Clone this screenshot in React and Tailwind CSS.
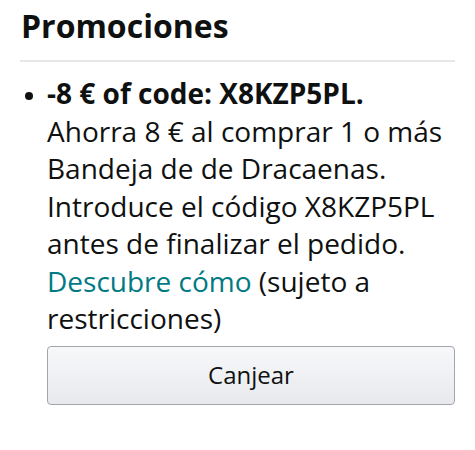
export default function App() {
  return (
    <div className="w-[475px] h-[450px] bg-white text-[#0f1111] font-['Open_Sans',sans-serif]">
      <div className="pl-[20px] pr-[20px] pt-[6px]">
        <h2 className="pl-[1px] text-[32px] leading-[40px] font-bold">Promociones</h2>
        <div className="mt-[14px] h-[2px] bg-[#e7e7e7]" />
        <ul className="mt-[13px] text-[28px] leading-[37.5px]">
          <li className="flex">
            <span className="w-[27px] shrink-0 pl-[5px] pt-[17px]">
              <span className="block w-[8px] h-[8px] rounded-full bg-[#0f1111]" />
            </span>
            <div className="flex-1">
              <div className="font-bold">-8 € of code: X8KZP5PL.</div>
              <div>
                Ahorra 8 € al comprar 1 o más Bandeja de de Dracaenas. Introduce el código X8KZP5PL antes de finalizar el pedido.{' '}
                <a href="#" className="text-[#017a84]">Descubre cómo</a> (sujeto a restricciones)
              </div>
              <button className="mt-[8px] w-full h-[59px] rounded-[4px] border border-[#a2a6ac] bg-gradient-to-b from-[#f7f8fa] to-[#e7e9ec] text-[24px] text-[#0f1111]">
                Canjear
              </button>
            </div>
          </li>
        </ul>
      </div>
    </div>
  );
}
